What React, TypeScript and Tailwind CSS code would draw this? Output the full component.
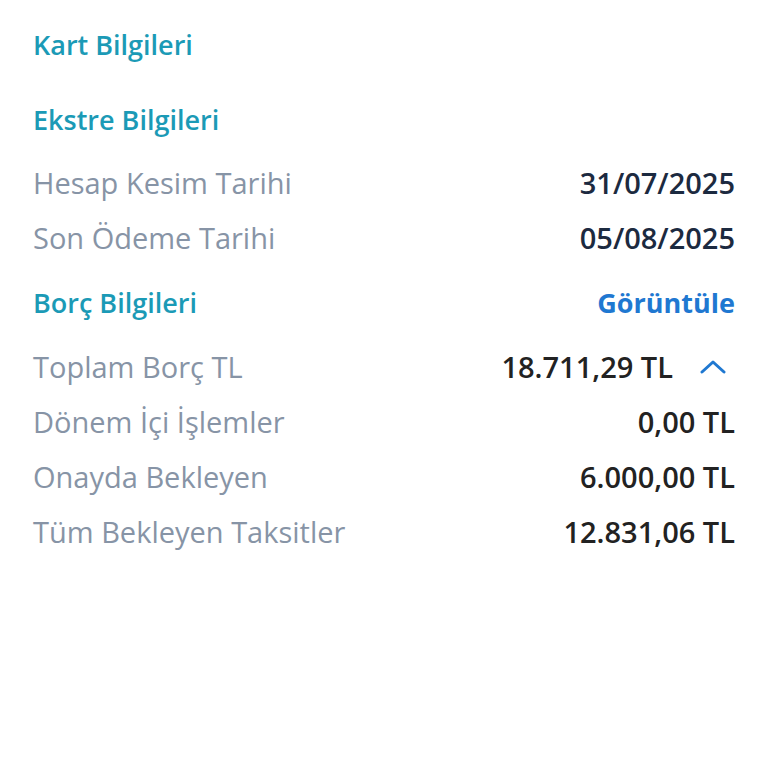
import React from "react";

function Row({ label, value, valueClass = "text-[#1c2a40]", extra, className = "" }: { label: string; value: string; valueClass?: string; extra?: React.ReactNode; className?: string }) {
  return (
    <div className={`flex items-center justify-between h-[55px] ${className}`}>
      <span className="text-[#8794a6]">{label}</span>
      <div className="flex items-center">
        <span className={`font-semibold ${valueClass}`}>{value}</span>
        {extra}
      </div>
    </div>
  );
}

export default function App() {
  return (
    <div className="w-[768px] h-[768px] bg-white px-[33px] pt-[22px] text-[29px]" style={{ fontFamily: '"Open Sans", sans-serif' }}>
      <div className="h-[46px] flex items-center text-[#1b9ab6] font-semibold text-[27px]">Kart Bilgileri</div>
      <div className="h-[29px]" />
      <div className="h-[46px] flex items-center text-[#1b9ab6] font-semibold text-[27px]">Ekstre Bilgileri</div>
      <Row label="Hesap Kesim Tarihi" value="31/07/2025" className="mt-[12px]" />
      <Row label="Son Ödeme Tarihi" value="05/08/2025" />
      <div className="flex items-center justify-between h-[55px] mt-[11px] text-[27px]">
        <span className="text-[#1b9ab6] font-semibold">Borç Bilgileri</span>
        <span className="text-[#1f78d1] font-bold">Görüntüle</span>
      </div>
      <Row
        className="mt-[8px]"
        label="Toplam Borç TL"
        value="18.711,29 TL"
        valueClass="text-[#222222]"
        extra={
          <svg width="26" height="16" viewBox="0 0 26 16" className="ml-[27px] mr-[9px]" fill="none">
            <path d="M2 13 L13 3 L24 13" stroke="#1f78d1" strokeWidth="3" strokeLinecap="round" strokeLinejoin="round" />
          </svg>
        }
      />
      <Row label="Dönem İçi İşlemler" value="0,00 TL" valueClass="text-[#222222]" />
      <Row label="Onayda Bekleyen" value="6.000,00 TL" valueClass="text-[#222222]" />
      <Row label="Tüm Bekleyen Taksitler" value="12.831,06 TL" valueClass="text-[#222222]" />
    </div>
  );
}
